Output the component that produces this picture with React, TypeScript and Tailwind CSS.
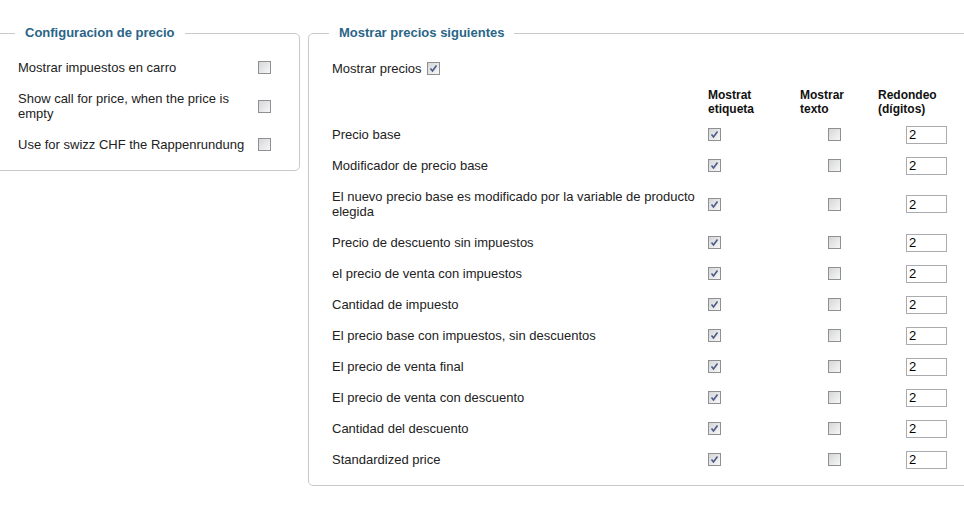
import React from 'react';

const Box: React.FC<{ checked?: boolean }> = ({ checked }) => (
  <span className="inline-flex h-[13px] w-[13px] shrink-0 items-center justify-center border border-[#8f9092] bg-gradient-to-br from-[#d5d6d8] to-[#f7f7f7]">
    {checked && (
      <svg width="11" height="11" viewBox="0 0 11 11">
        <path d="M2.5 5.5 L4.5 8 L8.5 2.5" fill="none" stroke="#4a5a86" strokeWidth="1.6" />
      </svg>
    )}
  </span>
);

const Digits: React.FC = () => (
  <span className="my-[-2px] inline-flex h-[18px] w-[41px] items-center border border-[#a9abaf] bg-white pl-[2px] text-[13px] leading-[15px] text-black">
    2
  </span>
);

const rows = [
  'Precio base',
  'Modificador de precio base',
  'El nuevo precio base es modificado por la variable de producto elegida',
  'Precio de descuento sin impuestos',
  'el precio de venta con impuestos',
  'Cantidad de impuesto',
  'El precio base con impuestos, sin descuentos',
  'El precio de venta final',
  'El precio de venta con descuento',
  'Cantidad del descuento',
  'Standardized price',
];

const leftRows = [
  'Mostrar impuestos en carro',
  'Show call for price, when the price is empty',
  'Use for swizz CHF the Rappenrundung',
];

export default function App() {
  return (
    <div className="h-[508px] w-[964px] overflow-hidden bg-white pt-[25px] font-['Liberation_Sans',Arial,sans-serif] text-[13px] text-[#222]">
      <div className="flex items-start">
        {/* Configuracion de precio */}
        <fieldset className="ml-[-8px] w-[308px] shrink-0 rounded-[5px] border border-[#c9c9c9] pb-[10px] pl-[25px] pt-[11px]">
          <legend className="ml-[-3px] px-[10px] text-[13px] font-bold leading-[16px] text-[#2a6587]">
            Configuracion de precio
          </legend>
          {leftRows.map((r) => (
            <div key={r} className="grid grid-cols-[240px_13px] items-center py-[8px] leading-[15px]">
              <span className="pr-[6px]">{r}</span>
              <Box />
            </div>
          ))}
        </fieldset>

        {/* Mostrar precios siguientes */}
        <fieldset className="ml-[8px] w-[720px] shrink-0 rounded-[5px] border border-[#c9c9c9] pb-[10px] pl-[23px] pt-[12px]">
          <legend className="ml-[-3px] px-[10px] text-[13px] font-bold leading-[16px] text-[#2a6587]">
            Mostrar precios siguientes
          </legend>
          <div className="flex items-center gap-[5px] py-[8px] leading-[15px]">
            <span>Mostrar precios</span>
            <Box checked />
          </div>
          <div className="grid grid-cols-[376px_92px_78px_120px] pb-[3px] pt-[4px] text-[12px] font-bold leading-[14px] text-[#111]">
            <span />
            <span>Mostrat<br />etiqueta</span>
            <span>Mostrar<br />texto</span>
            <span>Redondeo<br />(dígitos)</span>
          </div>
          {rows.map((r) => (
            <div key={r} className="grid grid-cols-[376px_92px_78px_120px] items-center py-[8px] leading-[15px]">
              <span className="pr-[2px]">{r}</span>
              <span className="flex"><Box checked /></span>
              <span className="flex pl-[28px]"><Box /></span>
              <span className="flex pl-[28px]"><Digits /></span>
            </div>
          ))}
        </fieldset>
      </div>
    </div>
  );
}
